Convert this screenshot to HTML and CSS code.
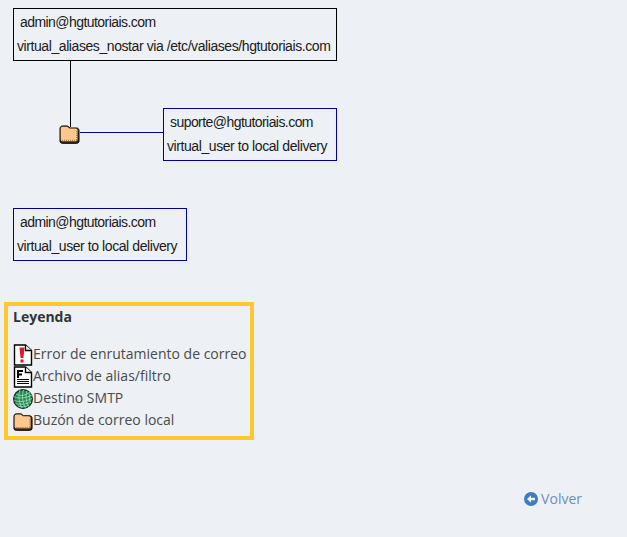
FILE: index.html
```html
<!DOCTYPE html>
<html lang="es">
<head>
<meta charset="utf-8">
<title>Leyenda</title>
<link rel="stylesheet" href="styles.css">
</head>
<body>
<div class="diagram">
  <div class="node node-black node-a">
    <div class="addr">admin@hgtutoriais.com</div>
    <div class="via">virtual_aliases_nostar via /etc/valiases/hgtutoriais.com</div>
  </div>
  <div class="wire wire-v"></div>
  <div class="wire wire-h"></div>
  <svg class="folder-node" width="21" height="19" viewBox="0 0 21 19">
    <use href="#folder"/>
  </svg>
  <div class="node node-blue node-b">
    <div class="addr">suporte@hgtutoriais.com</div>
    <div class="via">virtual_user to local delivery</div>
  </div>
  <div class="node node-blue node-c">
    <div class="addr">admin@hgtutoriais.com</div>
    <div class="via">virtual_user to local delivery</div>
  </div>
</div>

<section class="legend">
  <h2 class="legend-title">Leyenda</h2>
  <ul class="legend-list">
    <li class="legend-row">
      <svg class="legend-icon" width="20" height="22" viewBox="0 0 20 22">
        <path d="M1.5 1H12.5L18.5 6.5V21H1.5Z" fill="#fff" stroke="#000" stroke-width="1.4"/>
        <path d="M12.5 1V6.5H18.5" fill="#fff" stroke="#000" stroke-width="1.4"/>
        <path d="M6.5 3.5H11.5L10.4 14H7.6Z" fill="#e0162b"/>
        <rect x="7.5" y="15.5" width="3" height="3" fill="#e0162b"/>
      </svg>
      <span>Error de enrutamiento de correo</span>
    </li>
    <li class="legend-row">
      <svg class="legend-icon" width="20" height="22" viewBox="0 0 20 22">
        <path d="M1.5 1H12.5L18.5 6.5V21H1.5Z" fill="#fff" stroke="#000" stroke-width="1.4"/>
        <path d="M12.5 1V6.5H18.5" fill="#fff" stroke="#000" stroke-width="1.4"/>
        <path d="M5 12V5H10M5 8.5H9" fill="none" stroke="#000" stroke-width="2"/>
        <path d="M4 13.5H16M4 15.5H16M4 17.5H16" stroke="#000" stroke-width="1"/>
      </svg>
      <span>Archivo de alias/filtro</span>
    </li>
    <li class="legend-row">
      <svg class="legend-icon" width="20" height="22" viewBox="0 0 20 22">
        <circle cx="10" cy="11" r="9.4" fill="#1f8a55" stroke="#0b2e22" stroke-width="1.2"/>
        <path d="M3 6C8 9 13 7 17 4M1.5 9C7 11 13 10 19 7M1.5 12.500C7 14.500 13 13.500 19 10.500M2.500 15.500C8 17 14 16 18 14M5 18C9 19.500 13 19 16 17M7 2C5 8 6 15 9 20M10.500 1.800C8.500 8 9.500 15 12.500 19.800M14 2.500C12.500 8 13 14 15.500 18.500M17 4.500C16 9 16 13 18 15.500" fill="none" stroke="#a9dcb6" stroke-width=".8"/>
      </svg>
      <span>Destino SMTP</span>
    </li>
    <li class="legend-row">
      <svg class="legend-icon" width="20" height="22" viewBox="0 -1 21 19">
        <use href="#folder"/>
      </svg>
      <span>Buzón de correo local</span>
    </li>
  </ul>
</section>

<div class="footer">
  <a class="back" href="#">
    <svg class="back-icon" width="14" height="14" viewBox="0 0 14 14">
      <circle cx="7" cy="7" r="7" fill="#3f7cc0"/>
      <path d="M3 7L7 3.2V5.7H11V8.3H7V10.8Z" fill="#edf1f5"/>
    </svg>
    <span>Volver</span>
  </a>
</div>

<svg class="defs" width="0" height="0">
  <defs>
    <g id="folder">
      <path d="M1 4C1 2 2 1 3.500 1H8C9.500 1 10 2.500 11 3H17.500C19 3 20 4 20 5.500V16C20 17.500 19 18.300 17.500 18.300H3.500C2 18.300 1 17.500 1 16Z" fill="#3d2a14" stroke="#000" stroke-width="1"/>
      <path d="M1.700 4C1.700 2.500 2.500 1.700 3.500 1.700H8C9 1.700 9.700 3.600 11 3.600H16.500C17.800 3.600 18.500 4.400 18.500 5.500V14.500C18.500 15.500 17.800 16.200 16.800 16.200H3.500C2.500 16.200 1.700 15.500 1.700 14.500Z" fill="#fec88c"/>
      <path d="M3 15.300H17.800M17.800 6V15" stroke="#7a5428" stroke-width=".8" stroke-dasharray="1 1" fill="none"/>
    </g>
  </defs>
</svg>
</body>
</html>
```
FILE: styles.css
```css
html, body {
  margin: 0;
  padding: 0;
}

body {
  width: 627px;
  height: 537px;
  overflow: hidden;
  background: #edf1f5;
  font-family: "Open Sans", "Noto Sans", sans-serif;
  font-size: 14px;
  color: #4a4a4a;
}

.diagram {
  position: relative;
  height: 302px;
}

.node {
  position: absolute;
  box-sizing: border-box;
  height: 53px;
  border: 1px solid #000;
  font-family: "Liberation Sans", Arial, sans-serif;
  font-size: 14px;
  line-height: 24px;
  color: #1a1a1a;
  white-space: nowrap;
}

.node-black { border-color: #000; }
.node-blue { border-color: #0000a0; }

.node-a { left: 13px; top: 8px; width: 324px; }
.node-b { left: 163px; top: 108px; width: 174px; }
.node-c { left: 13px; top: 208px; width: 174px; }

.addr { padding: 1px 0 0 6px; letter-spacing: -0.56px; }
.via { padding-left: 3px; letter-spacing: -0.42px; }

.wire { position: absolute; }
.wire-v { left: 70px; top: 61px; width: 1px; height: 66px; background: #000; }
.wire-h { left: 80px; top: 132px; width: 83px; height: 1px; background: #0000a0; }

.folder-node { position: absolute; left: 59px; top: 125px; }

.legend {
  box-sizing: border-box;
  width: 250px;
  height: 138px;
  margin-left: 4px;
  padding: 1px 5px;
  border: 4px solid #fdc82a;
}

.legend-title {
  margin: 0;
  font-size: 14px;
  font-weight: 700;
  line-height: 20px;
  color: #333;
}

.legend-list {
  list-style: none;
  margin: 15px 0 0;
  padding: 0;
}

.legend-row {
  display: flex;
  align-items: center;
  height: 22px;
  white-space: nowrap;
}

.legend-icon {
  flex: none;
  margin-top: 3px;
}

.footer {
  display: flex;
  justify-content: flex-end;
  padding: 49px 45px 0 0;
}

.back {
  display: flex;
  align-items: center;
  gap: 3px;
  color: #6f8fb5;
  text-decoration: none;
  line-height: 20px;
}

.defs { position: absolute; }
```
